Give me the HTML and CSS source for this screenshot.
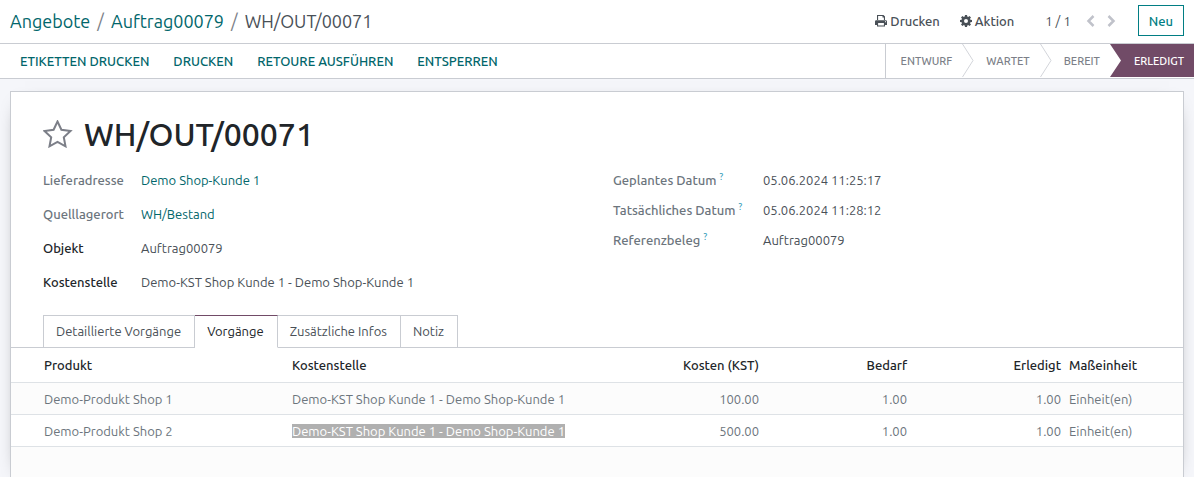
FILE: index.html
```
<!DOCTYPE html>
<html lang="de">
<head>
    <meta charset="UTF-8">
    <meta name="viewport" content="width=device-width, initial-scale=1.0">
    <title>WH/OUT/00071</title>
    <link rel="stylesheet" href="styles.css">
</head>
<body>
    <header class="control-panel">
        <nav class="breadcrumb">
            <a href="#">Angebote</a>
            <span class="slash">/</span>
            <a href="#">Auftrag00079</a>
            <span class="slash">/</span>
            <span>WH/OUT/00071</span>
        </nav>
        <div class="panel-actions">
            <button type="button" class="menu-btn">
                <svg width="12" height="12" viewBox="0 0 12 12" fill="currentColor"><path d="M2 0h6.500L10 1.500V5H8.900V2.500H7.500V1.100H3.100V5H2zM1.200 5.300h9.600A1.200 1.200 0 0 1 12 6.500V10h-2v1.600H2V10H0V6.500a1.200 1.200 0 0 1 1.200-1.200zM3.100 8v2.600h5.800V8zM10 6.200v1h1v-1z" fill-rule="evenodd"/></svg>
                Drucken
            </button>
            <button type="button" class="menu-btn">
                <svg width="12" height="12" viewBox="0 0 12 12" fill="currentColor"><path fill-rule="evenodd" d="M5 0h2l.3 1.600.9.400L9.500 1l1.500 1.500-1 1.300.4.900L12 5v2l-1.600.3-.4.900 1 1.300L9.500 11l-1.300-1-.9.400L7 12H5l-.3-1.600-.9-.4-1.300 1L1 9.500l1-1.300-.4-.9L0 7V5l1.600-.3.400-.9-1-1.300L2.500 1l1.300 1 .9-.4zM6 4a2 2 0 1 0 0 4 2 2 0 0 0 0-4z"/></svg>
                Aktion
            </button>
            <span class="pager">1 / 1</span>
            <button type="button" class="pager-btn" aria-label="Zurück">
                <svg width="9" height="12" viewBox="0 0 9 12"><path d="M7.500 1l-5 5 5 5"/></svg>
            </button>
            <button type="button" class="pager-btn" aria-label="Weiter">
                <svg width="9" height="12" viewBox="0 0 9 12"><path d="M1.500 1l5 5-5 5"/></svg>
            </button>
            <button type="button" class="new-btn">Neu</button>
        </div>
    </header>

    <div class="statusbar">
        <div class="statusbar-buttons">
            <button type="button">Etiketten drucken</button>
            <button type="button">Drucken</button>
            <button type="button">Retoure ausführen</button>
            <button type="button">Entsperren</button>
        </div>
        <div class="status-steps">
            <button type="button">Entwurf</button>
            <svg class="arrow" width="12" height="33" viewBox="0 0 12 33"><path d="M.5 0L11 16.500.5 33"/></svg>
            <button type="button">Wartet</button>
            <svg class="arrow" width="12" height="33" viewBox="0 0 12 33"><path d="M.5 0L11 16.500.5 33"/></svg>
            <button type="button">Bereit</button>
            <svg class="arrow arrow-active" width="12" height="33" viewBox="0 0 12 33"><path d="M0 0h12v33H0l11-16.500z"/></svg>
            <button type="button" class="active">Erledigt</button>
        </div>
    </div>

    <main class="sheet">
        <div class="title">
            <button type="button" class="star" aria-label="Priorität">
                <svg width="30" height="28" viewBox="0 0 30 28"><path d="M14.500 1.500l3.900 8.300 9.100 1.200-6.700 6.300 1.700 9-8-4.400-8 4.400 1.700-9L1.500 11l9.100-1.200z"/></svg>
            </button>
            <h1>WH/OUT/00071</h1>
        </div>

        <div class="fields">
            <dl class="group group-left">
                <dt>Lieferadresse</dt>
                <dd><a href="#">Demo Shop-Kunde 1</a></dd>
                <dt>Quelllagerort</dt>
                <dd><a href="#">WH/Bestand</a></dd>
                <dt class="strong">Objekt</dt>
                <dd>Auftrag00079</dd>
                <dt class="strong">Kostenstelle</dt>
                <dd>Demo-KST Shop Kunde 1 - Demo Shop-Kunde 1</dd>
            </dl>
            <dl class="group group-right">
                <dt>Geplantes Datum <sup>?</sup></dt>
                <dd>05.06.2024 11:25:17</dd>
                <dt>Tatsächliches Datum <sup>?</sup></dt>
                <dd>05.06.2024 11:28:12</dd>
                <dt>Referenzbeleg <sup>?</sup></dt>
                <dd>Auftrag00079</dd>
            </dl>
        </div>

        <div class="tabs" role="tablist">
            <button type="button" role="tab">Detaillierte Vorgänge</button>
            <button type="button" role="tab" class="active" aria-selected="true">Vorgänge</button>
            <button type="button" role="tab">Zusätzliche Infos</button>
            <button type="button" role="tab">Notiz</button>
        </div>

        <table class="moves">
            <colgroup>
                <col class="col-product">
                <col>
                <col class="col-number">
                <col class="col-number">
                <col class="col-done">
                <col class="col-unit">
            </colgroup>
            <thead>
                <tr>
                    <th>Produkt</th>
                    <th>Kostenstelle</th>
                    <th class="number">Kosten (KST)</th>
                    <th class="number">Bedarf</th>
                    <th class="number">Erledigt</th>
                    <th>Maßeinheit</th>
                </tr>
            </thead>
            <tbody>
                <tr>
                    <td>Demo-Produkt Shop 1</td>
                    <td>Demo-KST Shop Kunde 1 - Demo Shop-Kunde 1</td>
                    <td class="number">100.00</td>
                    <td class="number">1.00</td>
                    <td class="number">1.00</td>
                    <td>Einheit(en)</td>
                </tr>
                <tr>
                    <td>Demo-Produkt Shop 2</td>
                    <td><span class="selected">Demo-KST Shop Kunde 1 - Demo Shop-Kunde 1</span></td>
                    <td class="number">500.00</td>
                    <td class="number">1.00</td>
                    <td class="number">1.00</td>
                    <td>Einheit(en)</td>
                </tr>
            </tbody>
        </table>
        <div class="moves-rest"></div>
    </main>
</body>
</html>
```
FILE: styles.css
```
* {
    box-sizing: border-box;
}

body {
    margin: 0;
    min-height: 100vh;
    display: flex;
    flex-direction: column;
    font-family: Ubuntu, "Noto Sans", sans-serif;
    font-size: 13px;
    line-height: 18px;
    color: #495057;
    background-color: #f5f6fa;
}

button {
    padding: 0;
    border: none;
    background: none;
    font: inherit;
    color: inherit;
    white-space: nowrap;
    cursor: pointer;
}

a {
    color: #01666b;
    text-decoration: none;
}

/* Top bar */
.control-panel {
    display: flex;
    align-items: center;
    justify-content: space-between;
    height: 44px;
    padding: 0 10px 2px;
    background-color: #fff;
    border-bottom: 1px solid #c9ccd2;
}

.breadcrumb {
    display: flex;
    gap: 7px;
    font-size: 18px;
    line-height: 24px;
}

.slash {
    color: #7c7f88;
}

.panel-actions {
    display: flex;
    align-items: center;
}

.menu-btn {
    display: flex;
    align-items: center;
    gap: 3px;
    margin-right: 20px;
    font-weight: 500;
}

.pager {
    margin: 0 15px 0 11px;
}

.pager-btn {
    display: flex;
    margin-right: 12px;
}

.pager-btn svg {
    fill: none;
    stroke: #c0c2ca;
    stroke-width: 2.5;
}

.new-btn {
    height: 31px;
    margin-left: 10px;
    padding: 0 10px;
    border: 1px solid #017e84;
    color: #017e84;
    font-weight: 500;
}

/* Action buttons and status */
.statusbar {
    display: flex;
    justify-content: space-between;
    height: 35px;
    background-color: #fff;
    border-bottom: 1px solid #c9ccd2;
}

.statusbar-buttons {
    display: flex;
    gap: 24px;
    padding-left: 20px;
}

.statusbar-buttons button {
    color: #01666b;
    font-weight: 500;
    text-transform: uppercase;
}

.status-steps {
    display: flex;
    padding-bottom: 1px;
    border-left: 1px solid #c9ccd2;
}

.status-steps button {
    padding: 0 10px 0 12px;
    color: #7c7f88;
    font-size: 11px;
    font-weight: 500;
    text-transform: uppercase;
}

.status-steps button:first-child {
    padding-left: 15px;
}

.status-steps .active {
    background-color: #714b67;
    color: #fff;
}

.arrow {
    fill: none;
    stroke: #d3d5da;
}

.arrow-active {
    fill: #714b67;
    stroke: none;
}

/* Form sheet */
.sheet {
    flex: 1;
    display: flex;
    flex-direction: column;
    margin: 12px 10px 0;
    background-color: #fff;
    border: 1px solid #c9ccd2;
    border-bottom: none;
    box-shadow: 0 5px 20px -15px #000;
}

.title {
    display: flex;
    align-items: center;
    gap: 11px;
    padding: 22px 32px 0;
}

.star {
    display: flex;
}

.star svg {
    fill: none;
    stroke: #7c7f88;
    stroke-width: 2;
}

h1 {
    margin: 0;
    font-size: 32px;
    line-height: 40px;
    font-weight: 500;
    color: #212529;
}

.fields {
    display: grid;
    grid-template-columns: 1fr 1fr;
    gap: 32px;
    padding: 17px 32px 0;
}

.group {
    display: grid;
    align-content: start;
    margin: 0;
}

.group-left {
    grid-template-columns: 98px 1fr;
    row-gap: 16px;
}

.group-right {
    grid-template-columns: 150px 1fr;
    row-gap: 12px;
}

dt {
    color: #6c757d;
    font-weight: 500;
    white-space: nowrap;
}

dt.strong {
    color: #212529;
}

dd {
    margin: 0;
}

sup {
    font-size: 9px;
    line-height: 1;
    color: #3fa3bd;
}

/* Notebook tabs */
.tabs {
    display: flex;
    padding: 24px 32px 0;
    border-bottom: 1px solid #c9ccd2;
}

.tabs button {
    height: 33px;
    margin-bottom: -1px;
    padding: 0 13px 1px 12px;
    border: 1px solid #c9ccd2;
    border-left: none;
}

.tabs button:first-child {
    border-left: 1px solid #c9ccd2;
}

.tabs .active {
    border-top-color: #714b67;
    border-bottom-color: #fff;
    color: #212529;
}

/* Lines */
.moves {
    width: 100%;
    table-layout: fixed;
    border-collapse: collapse;
}

.col-product {
    width: 277px;
}

.col-number {
    width: 148px;
}

.col-done {
    width: 154px;
}

.col-unit {
    width: 118px;
}

.moves th,
.moves td {
    padding: 7px 4px 6px;
    border-bottom: 1px solid #dee2e6;
    text-align: left;
    white-space: nowrap;
}

.moves th {
    padding: 8px 4px;
    color: #212529;
    font-weight: 500;
}

.moves td {
    color: #6c757d;
}

.moves th:first-child,
.moves td:first-child {
    padding-left: 33px;
}

.moves .number {
    text-align: right;
}

.moves tbody tr:nth-child(odd),
.moves-rest {
    background-color: #fcfcfc;
}

.moves-rest {
    flex: 1;
}

.selected {
    background-color: #b0b0b0;
    color: #fff;
}
```
